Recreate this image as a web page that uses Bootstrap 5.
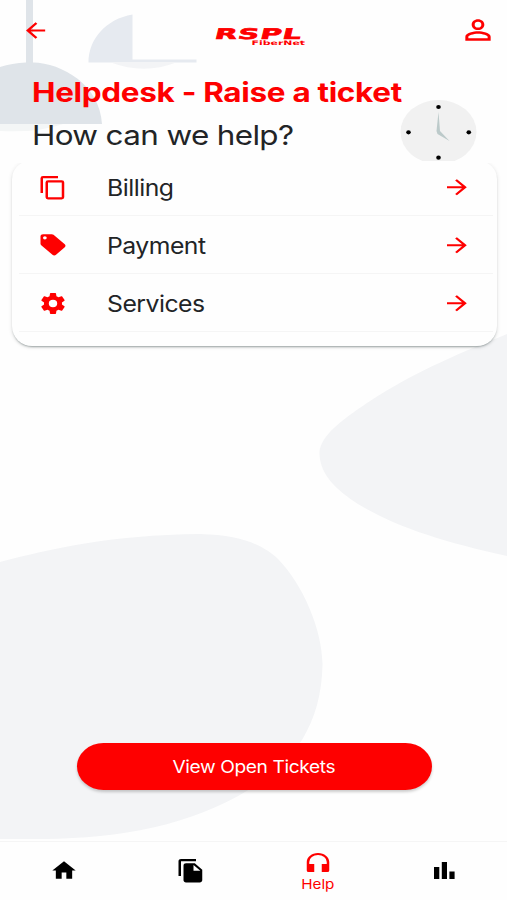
<!DOCTYPE html>
<html lang="en">
<head>
<meta charset="utf-8">
<meta name="viewport" content="width=device-width, initial-scale=1">
<title>Helpdesk</title>
<link href="https://cdn.jsdelivr.net/npm/bootstrap@5.3.0/dist/css/bootstrap.min.css" rel="stylesheet">
<style>
  body { font-family: Inter, "Liberation Sans", sans-serif; background: #fefefe; color: #222426; }
  .screen { height: 900px; width: 507px; }
  .backdrop { z-index: -1; }
  .brand-red { color: #fe0000; }
  svg { display: block; flex: none; fill: currentColor; }
  .wide { display: inline-block; white-space: nowrap; transform-origin: 0 50%; }
  .topbar { height: 60px; padding: 0 10px 0 21px; }
  .logo { width: 90px; height: 22px; margin-top: 15px; margin-left: 10px; font-family: "DejaVu Sans", sans-serif; font-weight: 700; }
  .logo-main { font-size: 14.6px; line-height: 14px; letter-spacing: .5px; -webkit-text-stroke: .6px #fe0000; transform: scaleX(2) skewX(-7deg); height: 13px; }
  .logo-sub { font: 700 6.2px/6px "DejaVu Sans", sans-serif; transform: scaleX(1.76); transform-origin: 100% 50%; }
  .hero { height: 101px; padding: 12px 29px 0 32px; }
  .hero h1 { font-size: 27px; line-height: 41px; font-weight: 700; letter-spacing: -.01em; transform: scaleX(1.165); }
  .hero h2 { font-size: 27.5px; line-height: 44px; font-weight: 400; letter-spacing: -.02em; transform: scaleX(1.142); }
  .topics { margin: 0 10px 0 12px; height: 185px; border-radius: 18px 18px 20px 20px; padding: 0 4px 0 7px; background: #fefefe;
            box-shadow: 0 2px 2px -1px rgba(80,95,95,.5), 0 1px 4px rgba(0,0,0,.12); clip-path: inset(2px -6px -8px -6px); }
  .topic { height: 58px; padding: 1px 21px 0 19px; background: transparent; border-color: #f5f5f5; border-width: 0 0 1px; border-radius: 0 !important; color: inherit; }
  .topic:first-child { height: 55px; padding-bottom: 2px; }
  .topic-name { font-size: 22.4px; line-height: 30px; margin-left: 39px; padding-top: 1px; letter-spacing: -.02em; transform: scaleX(1.105); }
  .topic:first-child .topic-name { padding-top: 0; }
  .open-btn { width: 355px; height: 47px; margin: 397px 0 0 77px; background: #fe0000; color: #fff; font-size: 17.4px;
              border-radius: 27px / 24px; box-shadow: 0 2px 3px rgba(0,0,0,.2); }
  .open-btn .wide { padding: 1px 2px 0 0; letter-spacing: -.02em; transform-origin: 50% 50%; transform: scaleX(1.1); }
  .tabbar { height: 59px; padding: 3px 0 0 1px; margin-right: -1px; background: #fefefe; border-top: 1px solid #f5f5f5; color: #000; }
  .tab-label { font-size: 13.6px; line-height: 17px; transform: scaleX(1.12); transform-origin: 50% 50%; }
</style>
</head>
<body>
<div class="screen position-relative d-flex flex-column overflow-hidden">
  <svg class="backdrop position-absolute top-0 start-0" width="507" height="900" viewBox="0 0 507 900" aria-hidden="true">
    <!-- hanging lamps -->
    <path fill="#dfe4e9" d="M26 0H33V62.500C62 63 100 85 102 124H0V67Q12 63 26 62.500Z"/>
    <path fill="#f4f6f6" d="M0 124H63Q38 133 0 131Z"/>
    <path fill="#e6eaf0" d="M132.500 14.500V59.500H196.500V62.500H88.500C88.500 39 106 19 132.500 14.500Z"/>
    <path fill="#f3f4f6" d="M111 62.500H176Q144 75 111 62.500Z"/>
    <!-- soft blobs -->
    <path fill="#f3f4f6" d="M507 334C463 352 417 370 367 403C342 420 320 436 319.500 453C319.500 475 338 491 358 504C396 527 443 542 507 556Z"/>
    <path fill="#f3f4f6" d="M0 562C50 549 110 535 200 534C245 535 265 547 278 559C304 586 322 630 322.500 664C322 695 315 718 302 740C285 763 270 777 250 789C190 826 120 838 45 839H0Z"/>
  </svg>

  <header class="topbar d-flex align-items-center justify-content-between brand-red">
    <svg width="29" height="25" viewBox="0 0 24 24" preserveAspectRatio="none" role="img" aria-label="Back"><path d="M20 11V13H8L13.500 18.500L12.080 19.920L4.160 12L12.080 4.080L13.500 5.500L8 11H20Z"/></svg>
    <div class="logo">
      <div class="logo-main wide d-block">RSPL</div>
      <div class="logo-sub text-end text-nowrap">FiberNet</div>
    </div>
    <svg width="38" height="32" viewBox="0 0 24 24" preserveAspectRatio="none" role="img" aria-label="Account"><path d="M12 5.900a2.100 2.100 0 1 1 0 4.200 2.100 2.100 0 0 1 0-4.200m0 9c2.970 0 6.100 1.460 6.100 2.100v1.100H5.900V17c0-.640 3.130-2.100 6.100-2.100M12 4C9.790 4 8 5.790 8 8s1.790 4 4 4 4-1.790 4-4-1.790-4-4-4zm0 9c-2.670 0-8 1.340-8 4v3h16v-3c0-2.660-5.330-4-8-4z"/></svg>
  </header>

  <section class="hero d-flex justify-content-between">
    <div>
      <h1 class="wide brand-red mb-0">Helpdesk - Raise a ticket</h1><br>
      <h2 class="wide mb-0">How can we help?</h2>
    </div>
    <svg class="align-self-end" width="78" height="61" viewBox="0 0 78 61" role="img" aria-label="Clock">
      <ellipse cx="38.500" cy="32" rx="38" ry="32" fill="#f1f1f1"/>
      <g fill="#000"><ellipse cx="38.500" cy="7" rx="2.300" ry="2.100"/><ellipse cx="8.500" cy="32.300" rx="2.300" ry="2.100"/><ellipse cx="68.800" cy="32.300" rx="2.300" ry="2.100"/><ellipse cx="38.500" cy="57.700" rx="2.300" ry="2.100"/></g>
      <path fill="#bccaca" d="M38.500 12L40 31L49.500 41L37.500 34L36.500 31Z"/>
    </svg>
  </section>

  <main class="flex-grow-1">
    <div class="topics list-group">
      <a href="#" class="topic list-group-item d-flex align-items-center">
        <svg class="brand-red" width="30" height="25.500" viewBox="0 0 24 24" preserveAspectRatio="none"><path d="M19 21H8V7H19M19 5H8A2 2 0 0 0 6 7V21A2 2 0 0 0 8 23H19A2 2 0 0 0 21 21V7A2 2 0 0 0 19 5M16 1H4A2 2 0 0 0 2 3V17H4V3H16V1Z"/></svg>
        <span class="topic-name wide">Billing</span>
        <svg class="brand-red ms-auto" width="30" height="24.500" viewBox="0 0 24 24" preserveAspectRatio="none"><path d="M4 11V13H16L10.500 18.500L11.920 19.920L19.840 12L11.920 4.080L10.500 5.500L16 11H4Z"/></svg>
      </a>
      <a href="#" class="topic list-group-item d-flex align-items-center">
        <svg class="brand-red" width="30" height="25.500" viewBox="0 0 24 24" preserveAspectRatio="none"><path d="M5.500 7A1.500 1.500 0 0 1 4 5.500A1.500 1.500 0 0 1 5.500 4A1.500 1.500 0 0 1 7 5.500A1.500 1.500 0 0 1 5.500 7M21.410 11.580L12.410 2.580C12.050 2.220 11.550 2 11 2H4C2.890 2 2 2.890 2 4V11C2 11.550 2.220 12.050 2.590 12.410L11.580 21.410C11.950 21.770 12.450 22 13 22C13.550 22 14.050 21.770 14.410 21.410L21.410 14.410C21.780 14.050 22 13.550 22 13C22 12.440 21.770 11.940 21.410 11.580Z"/></svg>
        <span class="topic-name wide">Payment</span>
        <svg class="brand-red ms-auto" width="30" height="24.500" viewBox="0 0 24 24" preserveAspectRatio="none"><path d="M4 11V13H16L10.500 18.500L11.920 19.920L19.840 12L11.920 4.080L10.500 5.500L16 11H4Z"/></svg>
      </a>
      <a href="#" class="topic list-group-item d-flex align-items-center">
        <svg class="brand-red" width="30" height="25" viewBox="-0.500 0 25 24" preserveAspectRatio="none"><path d="M12 15.500A3.500 3.500 0 0 1 8.500 12A3.500 3.500 0 0 1 12 8.500A3.500 3.500 0 0 1 15.500 12A3.500 3.500 0 0 1 12 15.500M19.430 12.970C19.470 12.650 19.500 12.330 19.500 12C19.500 11.670 19.470 11.340 19.430 11L21.540 9.370C21.730 9.220 21.780 8.950 21.660 8.730L19.660 5.270C19.540 5.050 19.270 4.960 19.050 5.050L16.560 6.050C16.040 5.660 15.500 5.320 14.870 5.070L14.500 2.420C14.460 2.180 14.250 2 14 2H10C9.750 2 9.540 2.180 9.500 2.420L9.130 5.070C8.500 5.320 7.960 5.660 7.440 6.050L4.950 5.050C4.730 4.960 4.460 5.050 4.340 5.270L2.340 8.730C2.210 8.950 2.270 9.220 2.460 9.370L4.570 11C4.530 11.340 4.500 11.670 4.500 12C4.500 12.330 4.530 12.650 4.570 12.970L2.460 14.630C2.270 14.780 2.210 15.050 2.340 15.270L4.340 18.730C4.460 18.950 4.730 19.030 4.950 18.950L7.440 17.940C7.960 18.340 8.500 18.680 9.130 18.930L9.500 21.580C9.540 21.820 9.750 22 10 22H14C14.250 22 14.460 21.820 14.500 21.580L14.870 18.930C15.500 18.670 16.040 18.340 16.560 17.940L19.050 18.950C19.270 19.030 19.540 18.950 19.660 18.730L21.660 15.270C21.780 15.050 21.730 14.780 21.540 14.630L19.430 12.970Z"/></svg>
        <span class="topic-name wide">Services</span>
        <svg class="brand-red ms-auto" width="30" height="24.500" viewBox="0 0 24 24" preserveAspectRatio="none"><path d="M4 11V13H16L10.500 18.500L11.920 19.920L19.840 12L11.920 4.080L10.500 5.500L16 11H4Z"/></svg>
      </a>
    </div>
    <button type="button" class="open-btn btn border-0 d-flex align-items-center justify-content-center p-0"><span class="wide">View Open Tickets</span></button>
  </main>

  <nav class="tabbar d-flex align-items-center text-center">
    <a href="#" class="col d-flex justify-content-center text-reset pb-1" aria-label="Home"><svg width="28" height="25" viewBox="0 0 24 24" preserveAspectRatio="none"><path d="M10 20V14H14V20H19V12H22L12 3L2 12H5V20H10Z"/></svg></a>
    <a href="#" class="col d-flex justify-content-center text-reset pb-1" aria-label="Documents"><svg width="30" height="25.500" viewBox="0 0 24 24" preserveAspectRatio="none"><path d="M16 1H4c-1.100 0-2 .9-2 2v14h2V3h12V1zm-1 4l6 6v10c0 1.100-.9 2-2 2H7.990C6.890 23 6 22.100 6 21l.01-14c0-1.100.89-2 1.990-2h7zm-1 7h5.500L14 6.500V12z"/></svg></a>
    <a href="#" class="col d-flex flex-column align-items-center brand-red text-decoration-none">
      <svg width="30" height="24" viewBox="0 0 24 24" preserveAspectRatio="none"><path d="M12 1C7 1 3 5 3 10V18.500Q3 20 4.500 20H9V12H5V10A7 7 0 0 1 19 10V12H15V20H19.500Q21 20 21 18.500V10C21 5 17 1 12 1Z"/></svg>
      <span class="tab-label wide">Help</span>
    </a>
    <a href="#" class="col d-flex justify-content-center text-reset pb-1" aria-label="Usage"><svg width="21" height="17" viewBox="0 0 21 17"><path d="M0 5H5.300V17H0ZM7.800 0H13V17H7.800ZM15.400 9.500H20.600V17H15.400Z"/></svg></a>
  </nav>
</div>
<script src="https://cdn.jsdelivr.net/npm/bootstrap@5.3.0/dist/js/bootstrap.bundle.min.js"></script>
</body>
</html>
